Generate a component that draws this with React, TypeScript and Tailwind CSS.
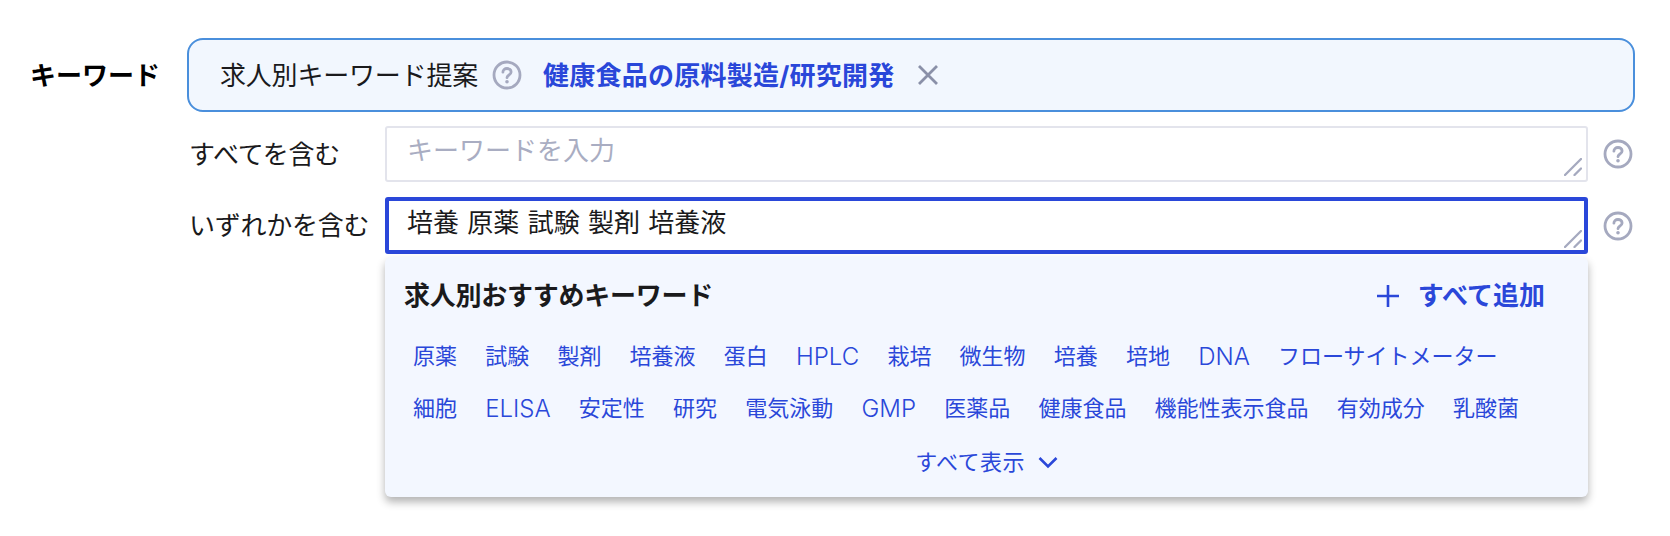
import React from 'react';

const row1 = ['原薬', '試験', '製剤', '培養液', '蛋白', 'HPLC', '栽培', '微生物', '培養', '培地', 'DNA', 'フローサイトメーター'];
const row2 = ['細胞', 'ELISA', '安定性', '研究', '電気泳動', 'GMP', '医薬品', '健康食品', '機能性表示食品', '有効成分', '乳酸菌'];

const HelpIcon = () => (
    <svg width="30" height="30" viewBox="0 0 30 30" fill="none" className="shrink-0">
        <circle cx="15" cy="15" r="13" stroke="#a5a9bf" strokeWidth="2.8" />
        <path d="M10.9 12.2c0-2.3 1.8-3.7 4.1-3.7s4.1 1.4 4.1 3.4c0 1.8-1.1 2.5-2.4 3.3-1.1.7-1.7 1.2-1.7 2.5" stroke="#a5a9bf" strokeWidth="2.8" strokeLinecap="round" />
        <circle cx="15" cy="21.8" r="1.8" fill="#a5a9bf" />
    </svg>
);

const ResizeHandle = () => (
    <svg width="18" height="18" viewBox="0 0 18 18" fill="none" className="absolute right-[6px] bottom-[6px] pointer-events-none">
        <path d="M1 17 17 1M10.5 17l6.5-6.5" stroke="#a5a9bf" strokeWidth="2.3" strokeLinecap="round" />
    </svg>
);

const Chip = ({ label }: { label: string }) => (
    <span className={/^[A-Z]+$/.test(label) ? 'text-[24px] font-light' : 'text-[22px]'}>{label}</span>
);

const App: React.FC = () => {
    return (
        <div className="w-[1670px] h-[536px] bg-white overflow-hidden pt-[38px] pl-[30px] text-[#1a1a1c] font-['Inter','Noto_Sans_CJK_JP',sans-serif]">
            {/* Keyword suggestion bar */}
            <div className="flex items-center">
                <span className="w-[157px] text-[26px] font-bold text-black">キーワード</span>
                <div className="w-[1448px] h-[74px] flex items-center pl-[31px] bg-[#f2f7fe] border-2 border-[#4a8fdc] rounded-[16px]">
                    <span className="text-[26px] tracking-[-0.2px]">求人別キーワード提案</span>
                    <span className="ml-[14px]"><HelpIcon /></span>
                    <span className="ml-[21px] text-[26px] font-bold tracking-[0.25px] text-[#2a47d9]">健康食品の原料製造/研究開発</span>
                    <svg width="22" height="22" viewBox="0 0 22 22" fill="none" className="ml-[22px]">
                        <path d="M2 2l18 18M20 2 2 20" stroke="#8a90a8" strokeWidth="2.8" />
                    </svg>
                </div>
            </div>

            <div className="ml-[159px] w-[1446px]">
                {/* Contains all */}
                <div className="flex items-center mt-[14px]">
                    <span className="w-[196px] text-[26px] tracking-[-0.25px]">すべてを含む</span>
                    <div className="relative w-[1203px] h-[56px]">
                        <textarea
                            readOnly
                            placeholder="キーワードを入力"
                            className="block w-full h-full resize-none bg-white border-2 border-[#e3e4ec] rounded-[3px] pl-[20px] pt-[3px] text-[26px] outline-none placeholder:text-[#a9adc2]"
                        />
                        <ResizeHandle />
                    </div>
                    <span className="ml-[15px]"><HelpIcon /></span>
                </div>

                {/* Contains any */}
                <div className="flex items-center mt-[15px]">
                    <span className="w-[196px] text-[26px] tracking-[-0.25px]">いずれかを含む</span>
                    <div className="relative w-[1203px] h-[57px]">
                        <textarea
                            readOnly
                            value="培養 原薬 試験 製剤 培養液"
                            className="block w-full h-full resize-none bg-white border-[4px] border-[#2a47d9] rounded-[3px] pl-[18px] pt-[2px] text-[26px] [word-spacing:1px] outline-none"
                        />
                        <ResizeHandle />
                    </div>
                    <span className="ml-[15px]"><HelpIcon /></span>
                </div>

                {/* Recommendation panel */}
                <div className="ml-[196px] w-[1203px] h-[240px] mt-[3px] bg-[#f3f7ff] rounded-[6px] shadow-[0_5px_8px_rgba(0,0,0,0.3)]">
                    <div className="flex items-center justify-between pt-[19px] pl-[19px] pr-[43px]">
                        <span className="text-[26px] font-bold tracking-[-0.25px]">求人別おすすめキーワード</span>
                        <button className="flex items-center text-[26px] font-bold text-[#2a47d9]">
                            <svg width="22" height="22" viewBox="0 0 22 22" fill="none" className="mr-[19px]">
                                <path d="M11 0v22M0 11h22" stroke="#2a47d9" strokeWidth="2.6" />
                            </svg>
                            すべて追加
                        </button>
                    </div>
                    <div className="mt-[25px] pl-[28px] pr-[40px] flex flex-col gap-[19px] text-[#2a47d9] leading-[33px]">
                        <div className="flex items-center gap-[28.2px]">
                            {row1.map(k => <Chip key={k} label={k} />)}
                        </div>
                        <div className="flex items-center gap-[28.2px]">
                            {row2.map(k => <Chip key={k} label={k} />)}
                        </div>
                    </div>
                    <div className="mt-[21px] flex items-center justify-center text-[22px] tracking-[0.4px] leading-[33px] text-[#2a47d9]">
                        すべて表示
                        <svg width="20" height="13" viewBox="0 0 20 13" fill="none" className="ml-[13px]">
                            <path d="M1.5 2 10 10.5 18.5 2" stroke="#2a47d9" strokeWidth="2.6" />
                        </svg>
                    </div>
                </div>
            </div>
        </div>
    );
};

export default App;
